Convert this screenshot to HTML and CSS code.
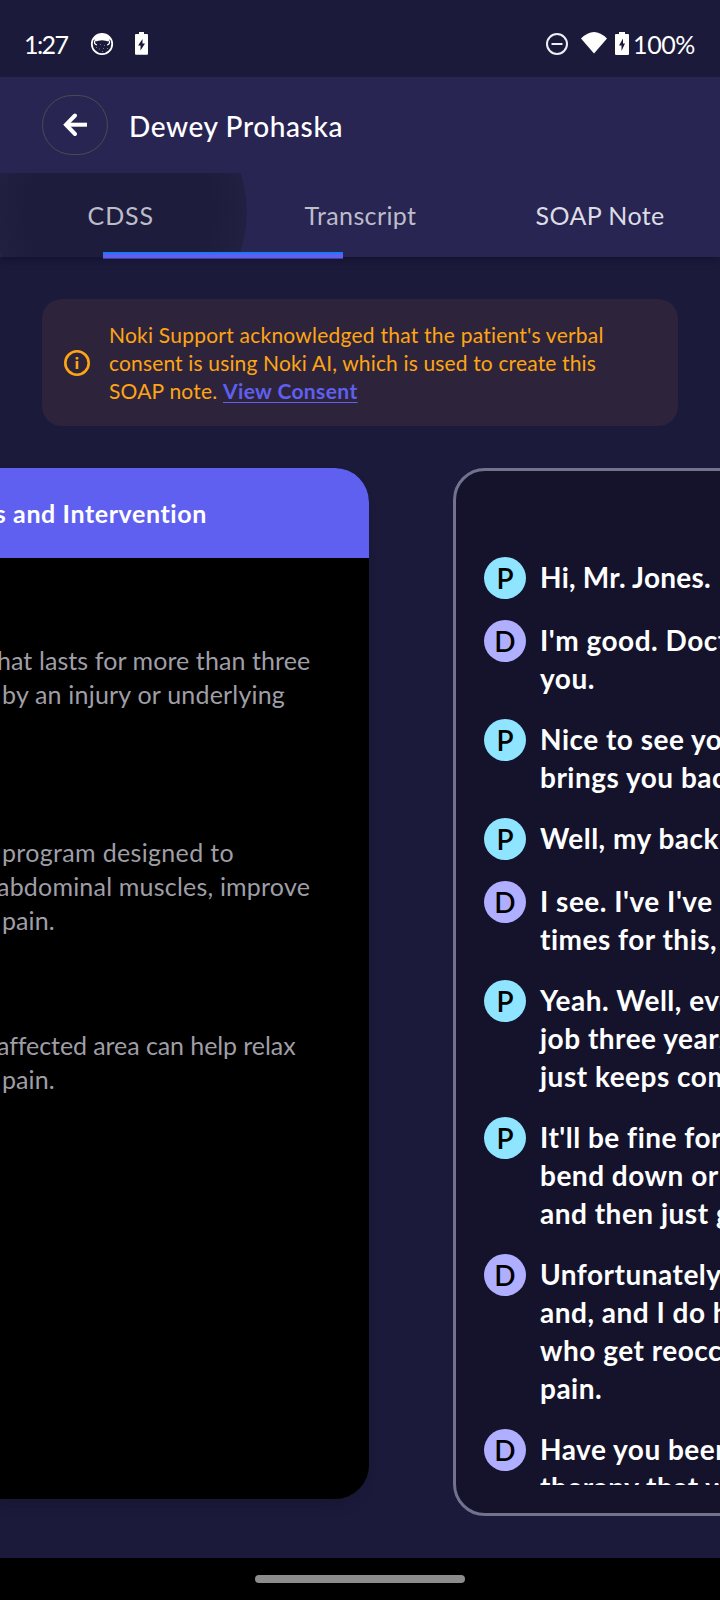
FILE: index.html
```html
<!DOCTYPE html>
<html lang="en">
<head>
<meta charset="utf-8">
<title>Dewey Prohaska</title>
<link rel="stylesheet" href="styles.css">
</head>
<body>
<div class="screen">
  <div class="status">
    <span class="time">1:27</span>
    <svg class="cat" width="24" height="24" viewBox="0 0 24 24"><circle cx="12" cy="12" r="10.200" fill="none" stroke="#fff" stroke-width="1.800"/><path d="M3.500 6Q12-2.500 20.500 6L18.500 9.500 15.500 8.700Q12 8 8.500 8.700L5.500 9.500z" fill="#fff"/><path d="M4.500 8.500Q4 12.500 7 13M19.500 8.500Q20 12.500 17 13" fill="none" stroke="#fff" stroke-width="1.200"/><path d="M6 15.500h1M10 12.500h1M14 13.500h1M9 17h1M13 16.500h1M12 19.500h1M17 16.500h1" stroke="#77768f"/></svg>
    <svg class="batt1" width="13" height="23" viewBox="0 0 13 23"><path fill="#fff" fill-rule="evenodd" d="M4 0h5v2h3q1 0 1 1v18.500q0 1.200-1 1.200H1q-1 0-1-1.200V3q0-1 1-1h3zM7.500 7L3 13.500h2.500V18.500L10 11.500H7.500z"/></svg>
    <div class="right">
      <svg width="24" height="24" viewBox="0 0 24 24"><circle cx="12" cy="12" r="10" fill="none" stroke="#eeeef4" stroke-width="2"/><path d="M6.500 12h11" stroke="#eeeef4" stroke-width="2"/></svg>
      <svg class="wifi" width="26" height="22" viewBox="0 0 26 22"><path fill="#fff" d="M0 6.500Q13-6.500 26 6.500L13 21.500z"/></svg>
      <svg class="batt2" width="14" height="23" viewBox="0 0 14 23"><path fill="#fff" fill-rule="evenodd" d="M4 0h6v2h3q1 0 1 1v18.500q0 1.500-1 1.500H1q-1 0-1-1.500V3q0-1 1-1h3zM8 6.500L4 13.500h2.500V19L10 11.500H8z"/></svg>
      <span class="pct">100%</span>
    </div>
  </div>
  <header class="bar">
    <div class="back"><svg width="26" height="26" viewBox="0 0 26 26" fill="none" stroke="#fff" stroke-width="4" stroke-linecap="round"><path stroke-linecap="butt" d="M4 12.700H25"/><path d="M13 3.500L4 12.700 13 22"/></svg></div>
    <h1>Dewey Prohaska</h1>
  </header>
  <nav class="tabs">
    <span class="tab cdss">CDSS</span><span class="tab">Transcript</span><span class="tab soap">SOAP Note</span>
    <i class="indicator"></i>
  </nav>
  <section class="banner">
    <svg width="26" height="26" viewBox="0 0 26 26"><circle cx="13" cy="13" r="11.700" fill="none" stroke="#ffa514" stroke-width="2.600"/><path d="M13 11v8M13 7v2.400" stroke="#ffa514" stroke-width="2.600"/></svg>
    <p><span class="l1">Noki Support acknowledged that the patient's verbal</span><br><span class="l2">consent is using Noki AI, which is used to create this</span><br>SOAP note. <a>View Consent</a></p>
  </section>
  <main class="pager">
    <article class="notes">
      <h2>s and Intervention</h2>
      <p class="a">hat lasts for more than three<br><span class="in under">by an injury or underlying</span></p>
      <p class="b"><span class="in wide">program designed to</span><br><span class="abd">abdominal muscles, improve</span><br><span class="in">pain.</span></p>
      <p class="c"><span class="aff">affected area can help relax</span><br><span class="in">pain.</span></p>
    </article>
    <article class="talk">
      <div class="lines">
        <div class="msg"><b class="p">P</b><p class="hi">Hi, Mr. Jones.</p></div>
        <div class="msg"><b class="d">D</b><p>I'm good. Doctor<br>you.</p></div>
        <div class="msg"><b class="p">P</b><p>Nice to see you.<br>brings you back</p></div>
        <div class="msg"><b class="p">P</b><p>Well, my back</p></div>
        <div class="msg"><b class="d">D</b><p>I see. I've I've<br>times for this,</p></div>
        <div class="msg"><b class="p">P</b><p>Yeah. Well, ever<br>job three years<br>just keeps coming</p></div>
        <div class="msg"><b class="p">P</b><p>It'll be fine for<br>bend down or<br>and then just gets</p></div>
        <div class="msg"><b class="d">D</b><p>Unfortunately,<br>and, and I do have<br>who get reoccurring<br>pain.</p></div>
        <div class="msg"><b class="d">D</b><p>Have you been<br>therapy that we</p></div>
      </div>
    </article>
  </main>
  <footer><i></i></footer>
</div>
</body>
</html>
```
FILE: styles.css
```css
* { box-sizing: border-box; margin: 0; padding: 0; }
body { background: #1b1a3b; font-family: Lato, "Open Sans", sans-serif; color: #fff; }
svg { display: block; flex: none; }
.screen { width: 720px; height: 1600px; overflow: hidden; display: flex; flex-direction: column; background: #1b1a3b; white-space: nowrap; font-variant-ligatures: none; }

.status { height: 77px; flex: none; display: flex; align-items: center; padding: 10px 25px 0 24px; font-size: 25px; }
.time { width: 66px; letter-spacing: -1.6px; }
.batt1 { margin-left: 21px; }
.right { margin-left: auto; display: flex; align-items: center; }
.wifi { margin: -2px 8px 0 12px; }
.pct { margin-left: 4px; letter-spacing: -.4px; }

.bar { position: relative; z-index: 2; height: 96px; flex: none; background: #282553; display: flex; align-items: center; padding: 0 42px; gap: 21px; }
.back { width: 66px; height: 60px; margin-top: -1px; border: 1px solid #4c4a50; border-radius: 30px; display: flex; align-items: center; justify-content: center; }
.bar h1 { font-size: 28px; font-weight: 500; letter-spacing: .6px; padding-top: 1px; }

.tabs { position: relative; z-index: 1; height: 84px; flex: none; display: grid; grid-template-columns: repeat(3, 1fr); align-items: center; text-align: center; font-size: 25px; letter-spacing: .4px; color: #bdbcc9; padding: 0 0 1px 1px; box-shadow: 0 2px 8px rgba(10, 8, 35, .5);
  background: radial-gradient(circle 127px at 120px 39px, #1e1c3c 0 72%, #212042 99.5%, #282553 100%); }
.cdss { letter-spacing: .9px; }
.soap { color: #dddce5; }
.indicator { position: absolute; left: 103px; top: 79px; width: 240px; height: 7px; background: #5f60ef; border-top: 2px solid #1a78fa; border-bottom: 1px solid #3f3da0; }

.banner { margin: 42px 42px 0; height: 127px; flex: none; border-radius: 20px; background: #2d243b; display: flex; align-items: center; gap: 19px; padding: 0 22px; color: #ffa514; }
.banner p { font-size: 21px; line-height: 28px; letter-spacing: .2px; }
.banner .l1 { letter-spacing: .23px; }
.banner .l2 { letter-spacing: .15px; }
.banner a { font-weight: 700; letter-spacing: .38px; color: #5f60ef; text-decoration: underline; text-decoration-thickness: 1px; text-underline-offset: 3px; }

.pager { margin-top: 42px; flex: 1; display: flex; align-items: flex-start; gap: 84px; min-height: 0; }
.notes { width: 369px; height: 1031px; flex: none; background: #000; border-radius: 0 34px 34px 0; overflow: hidden; color: #9f9ea6; font-size: 25px; line-height: 34px; box-shadow: -4px 8px 10px rgba(24, 20, 48, .5); }
.notes h2 { height: 90px; background: #5f60ef; color: #fff; font-size: 25px; line-height: 91px; font-weight: 700; letter-spacing: .6px; margin-bottom: 85px; padding-right: 162px; display: flex; justify-content: flex-end; }
.notes p { margin-left: -3px; letter-spacing: .08px; }
.notes .b { margin: 124px 0 91px -3px; }
.in { margin-left: 5px; }
.under { letter-spacing: .2px; }
.wide { letter-spacing: .33px; }
.abd { letter-spacing: .2px; }
.aff { letter-spacing: -.08px; }

.talk { width: 700px; height: 1048px; flex: none; border: 3px solid #73728e; border-radius: 32px; background: #14132b; padding: 86px 28px 28px; }
.lines { height: 928px; overflow: hidden; }
.msg { display: flex; gap: 14px; margin-bottom: 21px; min-height: 42px; }
.msg b { width: 42px; height: 42px; flex: none; border-radius: 50%; color: #000; text-align: center; font-size: 28px; font-weight: 600; line-height: 43px; }
.msg .p { background: #8fe4ff; }
.msg .d { background: #b0afff; }
.msg p { margin-top: -1px; padding-top: 2px; padding-bottom: 1px; font-size: 28px; line-height: 38px; font-weight: 700; letter-spacing: .5px; }
.msg .hi { letter-spacing: .25px; }

footer { height: 42px; flex: none; background: #000; display: flex; justify-content: center; padding-top: 17px; }
footer i { width: 210px; height: 8px; border-radius: 4px; background: #8c8c8c; }
```
